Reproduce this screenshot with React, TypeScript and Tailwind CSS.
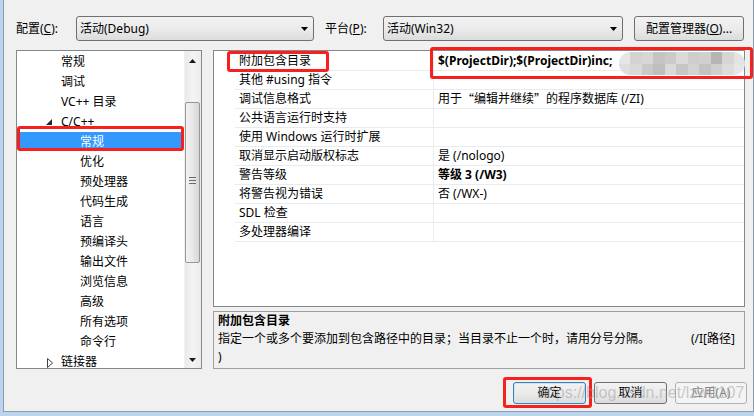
import React from "react";

type TreeItem = { t: string; lvl: 0 | 1; sel?: boolean; exp?: "open" | "closed" };

const treeItems: TreeItem[] = [
  { t: "常规", lvl: 0 },
  { t: "调试", lvl: 0 },
  { t: "VC++ 目录", lvl: 0 },
  { t: "C/C++", lvl: 0, exp: "open" },
  { t: "常规", lvl: 1, sel: true },
  { t: "优化", lvl: 1 },
  { t: "预处理器", lvl: 1 },
  { t: "代码生成", lvl: 1 },
  { t: "语言", lvl: 1 },
  { t: "预编译头", lvl: 1 },
  { t: "输出文件", lvl: 1 },
  { t: "浏览信息", lvl: 1 },
  { t: "高级", lvl: 1 },
  { t: "所有选项", lvl: 1 },
  { t: "命令行", lvl: 1 },
  { t: "链接器", lvl: 0, exp: "closed" },
];

const Q = ({ c }: { c: string }) => (
  <span className="font-['Noto_Sans_CJK_SC',sans-serif]">{c}</span>
);

const props: { name: string; value: React.ReactNode; bold?: boolean }[] = [
  { name: "附加包含目录", value: "$(ProjectDir);$(ProjectDir)inc;", bold: true },
  { name: "其他 #using 指令", value: "" },
  {
    name: "调试信息格式",
    value: (
      <>
        用于<Q c="“" />编辑并继续<Q c="”" />的程序数据库 (/ZI)
      </>
    ),
  },
  { name: "公共语言运行时支持", value: "" },
  { name: "使用 Windows 运行时扩展", value: "" },
  { name: "取消显示启动版权标志", value: "是 (/nologo)" },
  { name: "警告等级", value: "等级 3 (/W3)", bold: true },
  { name: "将警告视为错误", value: "否 (/WX-)" },
  { name: "SDL 检查", value: "" },
  { name: "多处理器编译", value: "" },
];

const mosaic1 = ["#e6e6e6", "#d3d3d3", "#d7d7d7", "#c4c4c4", "#cacaca", "#dadada", "#cdcdcd", "#d0d0d0", "#b5b5b5", "#d6d6d6", "#e3e3e3"];
const mosaic2 = ["#dedede", "#d9d9d9", "#c9c9c9", "#bebebe", "#dadada", "#c6c6c6", "#d2d2d2", "#c3c3c3", "#cfcfcf", "#dcdcdc", "#e7e7e7"];

function Arrow() {
  return (
    <svg width="7" height="4" viewBox="0 0 7 4" className="absolute right-[5px] top-[10px]">
      <path d="M0 0H7L3.5 4Z" fill="#000" />
    </svg>
  );
}

export default function App() {
  return (
    <div className="w-[754px] h-[416px] bg-[#bcd4ee] pl-[3px] pb-[4px] flex text-[12px] text-black font-['Noto_Sans','Noto_Sans_CJK_SC',sans-serif]">
      <div className="relative flex-1 bg-[#f0f0f0] border-l border-b border-r border-[#8d9db0] flex flex-col">
        {/* top row */}
        <div className="mt-[16px] pl-[12px] h-[25px] flex items-center">
          <div className="w-[60px] leading-[16px]">
            配置(<span className="underline">C</span>):
          </div>
          <div className="relative w-[238px] h-[25px] rounded-[3px] border border-[#707070] bg-linear-to-b from-[#f2f2f2] via-[#ebebeb] to-[#dcdcdc] flex items-center pl-[3px] leading-[16px]">
            活动(Debug)
            <Arrow />
          </div>
          <div className="ml-[11px] w-[58px] leading-[16px]">
            平台(<span className="underline">P</span>):
          </div>
          <div className="relative w-[240px] h-[25px] rounded-[3px] border border-[#707070] bg-linear-to-b from-[#f2f2f2] via-[#ebebeb] to-[#dcdcdc] flex items-center pl-[3px] leading-[16px]">
            活动(Win32)
            <Arrow />
          </div>
          <div className="ml-[11px] w-[110px] h-[25px] rounded-[3px] border border-[#707070] bg-linear-to-b from-[#f2f2f2] via-[#ebebeb] to-[#dcdcdc] flex items-center justify-center leading-[16px]">
            配置管理器(<span className="underline">O</span>)...
          </div>
        </div>

        {/* middle */}
        <div className="mt-[9px] pl-[12px] flex">
          {/* tree */}
          <div className="w-[186px] h-[319px] border border-[#828790] bg-white flex overflow-hidden">
            <div className="flex-1 overflow-hidden pt-[1px]">
              {treeItems.map((it, i) => (
                <div
                  key={i}
                  className={`relative h-[20px] flex items-center leading-[16px] ${it.lvl === 0 ? "pl-[44px]" : "pl-[63px]"}`}
                >
                  {it.sel && <div className="absolute left-[2px] right-[2px] top-0 bottom-[1px] bg-[#3399ff]" />}
                  {it.exp === "open" && (
                    <svg width="6" height="6" viewBox="0 0 6 6" className="absolute left-[29px] top-[7px]">
                      <path d="M6 0V6H0Z" fill="#262626" />
                    </svg>
                  )}
                  {it.exp === "closed" && (
                    <svg width="6" height="10" viewBox="0 0 6 10" className="absolute left-[30px] top-[6px]">
                      <path d="M0.5 0.5L5.5 5L0.5 9.5Z" fill="#fff" stroke="#404040" strokeWidth="1" />
                    </svg>
                  )}
                  <span className={`relative ${it.sel ? "text-white" : ""}`}>{it.t}</span>
                </div>
              ))}
            </div>
            {/* scrollbar */}
            <div className="relative w-[17px] h-full bg-linear-to-r from-[#e9e9e9] via-[#f4f4f4] to-[#ececec] border-l border-[#f0f0f0]">
              <svg width="7" height="4" viewBox="0 0 7 4" className="absolute left-[4px] top-[8px]">
                <path d="M0 4H7L3.5 0Z" fill="#1a1a1a" />
              </svg>
              <div className="absolute left-0 w-[15px] top-[51px] h-[161px] rounded-[2px] border border-[#979797] bg-linear-to-r from-[#f3f3f3] via-[#e8e8e8] to-[#d6d6d6]">
                <div className="absolute left-[3px] top-[74px] w-[7px] flex flex-col gap-[2px]">
                  <div className="h-[1px] bg-[#6b6b6b]" />
                  <div className="h-[1px] bg-[#6b6b6b]" />
                  <div className="h-[1px] bg-[#6b6b6b]" />
                </div>
              </div>
              <svg width="7" height="4" viewBox="0 0 7 4" className="absolute left-[4px] bottom-[6px]">
                <path d="M0 0H7L3.5 4Z" fill="#1a1a1a" />
              </svg>
            </div>
          </div>

          {/* right column */}
          <div className="ml-[11px] w-[532px] flex flex-col">
            <div className="h-[257px] border border-[#828790] bg-white pt-[1px]">
              {props.map((p, i) => (
                <div key={i} className="flex h-[19px] leading-[16px]">
                  <div className="w-[21px]" />
                  <div className="w-[199px] border-b border-r border-[#e8ecf1] pl-[4px] flex items-center whitespace-nowrap">
                    {p.name}
                  </div>
                  <div className={`flex-1 border-b border-[#e8ecf1] pl-[4px] flex items-center whitespace-nowrap ${p.bold ? "font-bold" : ""}`}>
                    {p.value}
                  </div>
                </div>
              ))}
            </div>
            <div className="mt-[4px] h-[58px] border border-[#a0a0a0] pl-[4px] pr-[9px] leading-[18px]">
              <div className="font-bold">附加包含目录</div>
              <div className="flex justify-between whitespace-nowrap">
                <span>指定一个或多个要添加到包含路径中的目录；当目录不止一个时，请用分号分隔。</span>
                <span>(/I[路径]</span>
              </div>
              <div>)</div>
            </div>
          </div>
        </div>

        {/* bottom buttons */}
        <div className="mt-[13px] pr-[6px] flex justify-end gap-[8px]">
          <div className="w-[73px] h-[22px] rounded-[3px] border border-[#3c7fb1] shadow-[inset_0_0_0_1px_#c8e8fa] bg-linear-to-b from-[#f2f2f2] via-[#ebebeb] to-[#dcdcdc] flex items-center justify-center leading-[16px]">
            确定
          </div>
          <div className="w-[73px] h-[22px] rounded-[3px] border border-[#707070] bg-linear-to-b from-[#f2f2f2] via-[#ebebeb] to-[#dcdcdc] flex items-center justify-center leading-[16px]">
            取消
          </div>
          <div className="w-[72px] h-[22px] rounded-[3px] border border-[#adb2b5] bg-[#f4f4f4] text-[#838383] flex items-center justify-center leading-[16px]">
            应用(A)
          </div>
        </div>

        {/* mosaic blur over value */}
        <div className="absolute left-[615px] top-[52px] w-[126px] h-[23px] rounded-full overflow-hidden grid grid-cols-11 blur-[0.5px]">
          {mosaic1.map((c, i) => (
            <div key={"a" + i} style={{ backgroundColor: c }} />
          ))}
          {mosaic2.map((c, i) => (
            <div key={"b" + i} style={{ backgroundColor: c }} />
          ))}
        </div>

        {/* red annotation boxes */}
        <div className="absolute left-[13px] top-[126px] w-[167px] h-[25px] border-[3px] border-[#f8201c] rounded-[3px]" />
        <div className="absolute left-[223px] top-[51px] w-[102px] h-[21px] border-[3px] border-[#f8201c] rounded-[3px]" />
        <div className="absolute left-[426px] top-[47px] w-[323px] h-[32px] border-[3px] border-[#f8201c] rounded-[3px]" />
        <div className="absolute left-[499px] top-[377px] w-[89px] h-[31px] border-[3px] border-[#f8201c] rounded-[3px]" />

        {/* watermark */}
        <div className="absolute left-[534px] top-[384px] text-[16px] leading-[18px] text-[#9a9a9a]/50 font-['Liberation_Sans',sans-serif] whitespace-nowrap">
          https://blog.csdn.net/lzw0107
        </div>
      </div>
    </div>
  );
}
